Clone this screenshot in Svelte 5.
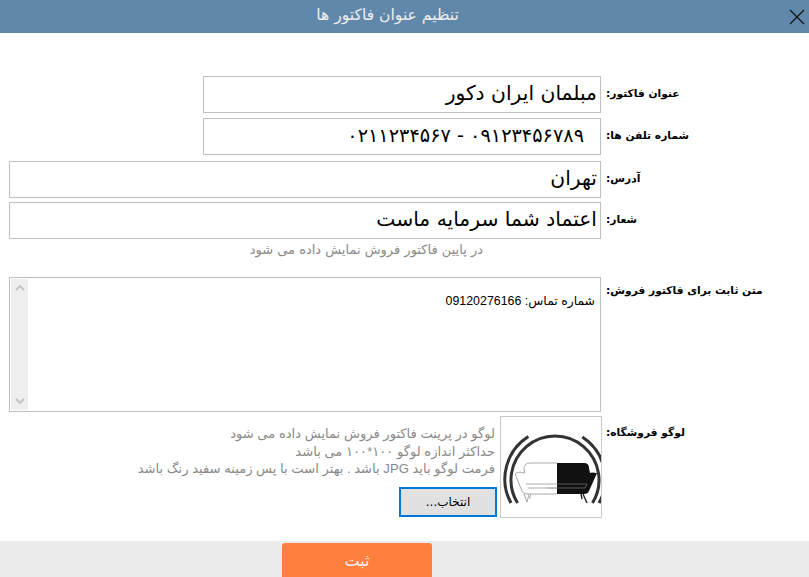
<script>
  let title = "مبلمان ایران دکور";
  let phones = "۰۹۱۲۳۴۵۶۷۸۹ - ۰۲۱۱۲۳۴۵۶۷";
  let address = "تهران";
  let slogan = "اعتماد شما سرمایه ماست";
</script>

<div class="page" dir="rtl">
  <header class="titlebar">
    <span class="title">تنظیم عنوان فاکتور ها</span>
    <button class="close" aria-label="بستن">
      <svg width="16" height="16" viewBox="0 0 16 16"><path d="M1 1 L15 15 M15 1 L1 15" stroke="#111" stroke-width="1.2" fill="none" /></svg>
    </button>
  </header>

  <main class="form">
    <div class="row r1">
      <div class="label"><span>عنوان فاکتور:</span></div>
      <div class="field short">{title}</div>
    </div>
    <div class="row r2">
      <div class="label"><span>شماره تلفن ها:</span></div>
      <div class="field short phones">{phones}</div>
    </div>
    <div class="row r3">
      <div class="label"><span>آدرس:</span></div>
      <div class="field">{address}</div>
    </div>
    <div class="row r4">
      <div class="label"><span>شعار:</span></div>
      <div class="field">{slogan}</div>
    </div>
    <div class="hint">در پایین فاکتور فروش نمایش داده می شود</div>

    <div class="row r5">
      <div class="label top"><span>متن ثابت برای فاکتور فروش:</span></div>
      <div class="textarea">
        <div class="text">شماره تماس: 09120276166</div>
        <div class="scrollbar">
          <svg width="10" height="6" viewBox="0 0 10 6"><path d="M1 5 L5 1 L9 5" stroke="#c4c4c4" stroke-width="2" fill="none" /></svg>
          <svg width="10" height="6" viewBox="0 0 10 6"><path d="M1 1 L5 5 L9 1" stroke="#c4c4c4" stroke-width="2" fill="none" /></svg>
        </div>
      </div>
    </div>

    <div class="row r6">
      <div class="label logo-label"><span>لوگو فروشگاه:</span></div>
      <div class="logo-area">
        <div class="logo">
          <svg width="100" height="100" viewBox="0 0 100 100">
            <path d="M16.5 86 A44 44 0 1 1 91.5 86" stroke="#333" stroke-width="3" fill="none" />
            <path d="M10 86 A50 50 0 0 1 27.4 19.6" stroke="#333" stroke-width="3" fill="none" />
            <path d="M81.3 20 A50 50 0 0 1 98 86" stroke="#333" stroke-width="3" fill="none" />
            <path d="M56 46 H29 Q23 46 23 52 L25 67 L27 71 H56" fill="#fff" stroke="#aaa" stroke-width="1" />
            <path d="M23 56 Q16 54 14 57 L21 74 Q22 77 26 77 H56" fill="#fff" stroke="#aaa" stroke-width="1" />
            <path d="M25 67 H56 M27 71 H56" fill="none" stroke="#aaa" stroke-width="1" />
            <path d="M56 46 H83 Q88 46 88 51 L89 56 Q90 55 96 56 L88 74 Q87 77 83 77 H56 Z" fill="#111" />
            <path d="M56 67 H86 L84 71 H56" fill="none" stroke="#777" stroke-width="0.7" />
            <path d="M23 77 L26 85 L28 77 M30 77 L28.5 82" stroke="#aaa" stroke-width="1" fill="none" />
            <path d="M82 77 L86 86 M80 77 L81 82" stroke="#222" stroke-width="1.4" fill="none" />
          </svg>
        </div>
        <div class="logo-side">
          <div class="logo-notes">
            <div>لوگو در پرینت فاکتور فروش نمایش داده می شود</div>
            <div>حداکثر اندازه لوگو ۱۰۰*۱۰۰ می باشد</div>
            <div>فرمت لوگو باید JPG باشد . بهتر است با پس زمینه سفید رنگ باشد</div>
          </div>
          <button class="pick">انتخاب...</button>
        </div>
      </div>
    </div>
  </main>

  <footer class="footer">
    <button class="save">ثبت</button>
  </footer>
</div>

<style>
  :global(body) {
    margin: 0;
    background: #fff;
  }

  .page {
    width: 809px;
    height: 577px;
    display: flex;
    flex-direction: column;
    overflow: hidden;
    font-family: "DejaVu Sans", sans-serif;
    color: #000;
  }

  .titlebar {
    height: 33px;
    flex: none;
    background: #6088aa;
    display: flex;
    align-items: center;
    justify-content: center;
    position: relative;
  }

  .title {
    color: #eee;
    font-size: 15.6px;
    margin-right: 34px;
    margin-bottom: 3px;
  }

  .close {
    position: absolute;
    right: 0;
    top: 0;
    width: 25px;
    height: 33px;
    display: flex;
    align-items: center;
    justify-content: center;
    padding: 0;
    border: none;
    background: transparent;
  }

  .form {
    flex: 1;
    padding-top: 43px;
    display: flex;
    flex-direction: column;
  }

  .row {
    display: flex;
    align-items: center;
  }

  .r1 { margin-bottom: 5px; }
  .r2 { margin-bottom: 6px; }
  .r3 { margin-bottom: 4px; }
  .r5 { margin-bottom: 4px; align-items: flex-start; }
  .r6 { align-items: flex-start; }

  .label {
    width: 208px;
    box-sizing: border-box;
    padding-left: 5px;
    flex: none;
    direction: ltr;
    text-align: left;
    font-size: 10.7px;
    font-weight: bold;
    margin-bottom: 2px;
  }

  .label span {
    display: inline-block;
    direction: rtl;
  }

  .label.top { margin-top: 7px; }
  .label.logo-label { margin-top: 10px; }

  .field {
    box-sizing: border-box;
    width: 592px;
    height: 37px;
    border: 1px solid #c0c0c0;
    padding: 0 3px;
    font-size: 20.3px;
    line-height: 33px;
    white-space: nowrap;
  }

  .field.short {
    width: 398px;
  }

  .field.phones {
    font-size: 19.3px;
    padding-right: 16px;
  }

  .hint {
    margin-top: 3px;
    height: 35px;
    padding-right: 326px;
    font-size: 13px;
    line-height: 16px;
    color: #8a8a8a;
  }

  .textarea {
    box-sizing: border-box;
    width: 592px;
    height: 135px;
    border: 1px solid #c0c0c0;
    display: flex;
    justify-content: space-between;
  }

  .text {
    font-family: "Liberation Sans", "DejaVu Sans", sans-serif;
    font-size: 12.4px;
    padding: 15px 5px 0 0;
    line-height: 16px;
  }

  .scrollbar {
    width: 17px;
    margin: 1px 0 1px 1px;
    background: #efefef;
    display: flex;
    flex-direction: column;
    justify-content: space-between;
    align-items: center;
    padding: 6px 0;
    box-sizing: border-box;
  }

  .logo-area {
    display: flex;
    width: 592px;
  }

  .logo {
    box-sizing: border-box;
    width: 102px;
    height: 102px;
    margin-right: -1px;
    border: 1px solid #c8c8c8;
    flex: none;
    overflow: hidden;
  }

  .logo svg { display: block; }

  .logo-side {
    flex: 1;
    padding-right: 3px;
  }

  .logo-notes {
    margin-top: 9px;
    padding-right: 2px;
    height: 62px;
    font-family: "Liberation Sans", "DejaVu Sans", sans-serif;
    font-size: 13.1px;
    line-height: 17.5px;
    color: #8a8a8a;
    white-space: nowrap;
  }

  .pick {
    display: block;
    box-sizing: border-box;
    width: 98px;
    height: 30px;
    border: 2px solid #0078d7;
    background: #e1e1e1;
    font-family: inherit;
    font-size: 12px;
    color: #000;
    padding: 0;
  }

  .footer {
    height: 36px;
    flex: none;
    background: #ebebeb;
    display: flex;
    justify-content: center;
    align-items: flex-end;
  }

  .save {
    width: 150px;
    height: 34px;
    border: none;
    border-radius: 3px 3px 0 0;
    background: #ff7f3f;
    color: #f4f4f4;
    font-family: inherit;
    font-size: 16px;
    padding: 0;
    margin-right: 95px;
  }
</style>
